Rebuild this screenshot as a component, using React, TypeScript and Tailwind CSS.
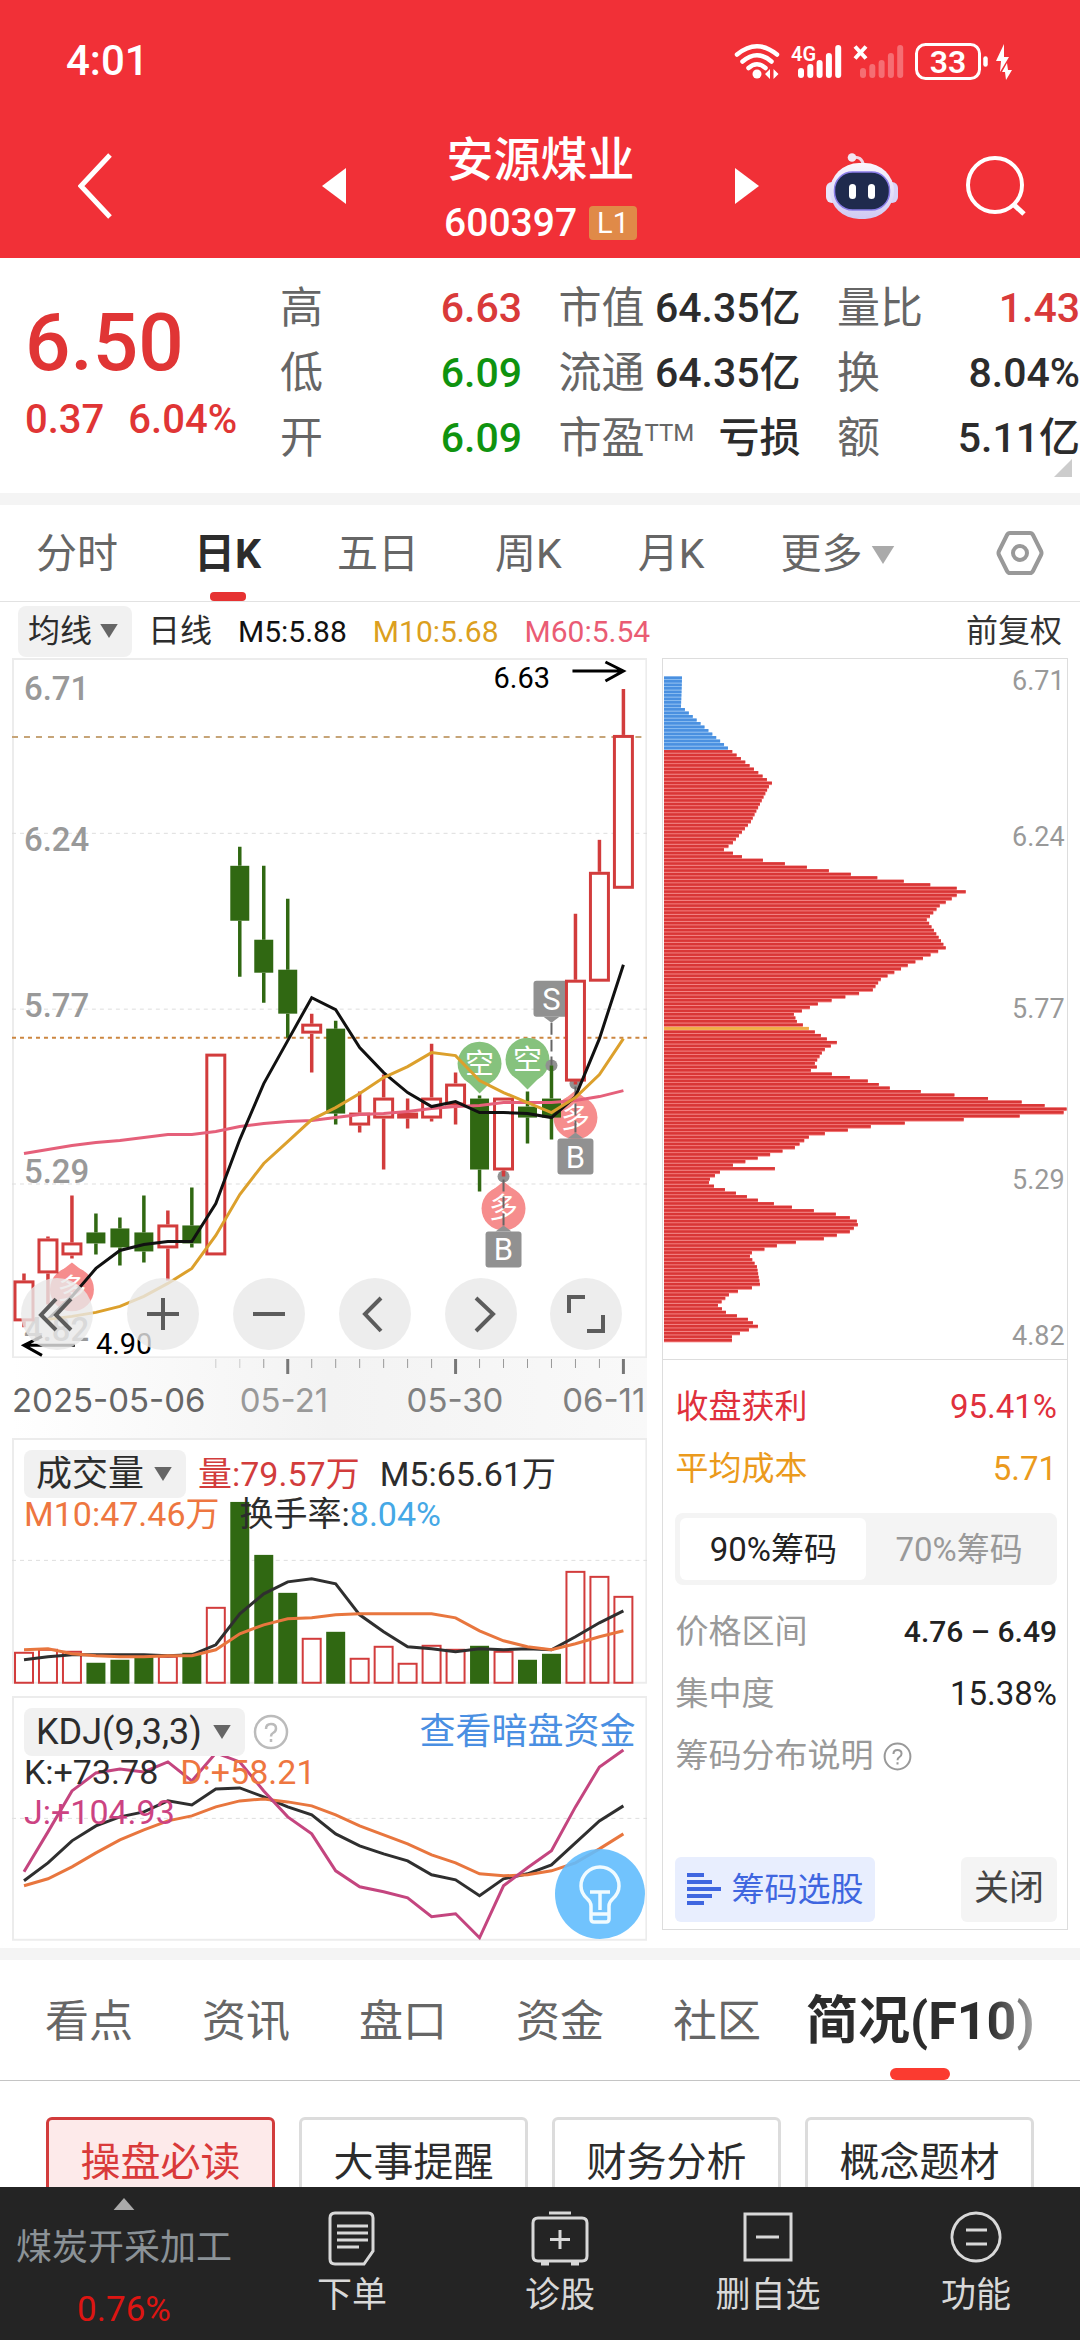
import { useState } from "react";
import type { ReactNode } from "react";
import clsx from "clsx";

const RED = "#d23c3c";
const GREEN = "#306812";

interface Candle {
  up: boolean;
  high: number;
  top: number;
  bottom: number;
  low: number;
  filled?: boolean;
}

const candles: Candle[] = [
  { up: true, high: 1274, top: 1281, bottom: 1322, low: 1328 },
  { up: true, high: 1237, top: 1239, bottom: 1274, low: 1305 },
  { up: true, high: 1196, top: 1243, bottom: 1256, low: 1259 },
  { up: false, high: 1214, top: 1233, bottom: 1244, low: 1255 },
  { up: false, high: 1218, top: 1229, bottom: 1248, low: 1266 },
  { up: false, high: 1196, top: 1233, bottom: 1252, low: 1263 },
  { up: true, high: 1211, top: 1225, bottom: 1249, low: 1281 },
  { up: false, high: 1188, top: 1226, bottom: 1244, low: 1248 },
  { up: true, high: 1054, top: 1054, bottom: 1256, low: 1256 },
  { up: false, high: 847, top: 866, bottom: 921, low: 977 },
  { up: false, high: 866, top: 940, bottom: 973, low: 1003 },
  { up: false, high: 899, top: 970, bottom: 1014, low: 1038 },
  { up: true, high: 1014, top: 1024, bottom: 1034, low: 1073 },
  { up: false, high: 1021, top: 1029, bottom: 1114, low: 1125 },
  { up: true, high: 1092, top: 1113, bottom: 1126, low: 1133 },
  { up: true, high: 1075, top: 1098, bottom: 1119, low: 1170 },
  { up: true, high: 1099, top: 1113, bottom: 1119, low: 1129, filled: true },
  { up: true, high: 1044, top: 1098, bottom: 1119, low: 1122 },
  { up: true, high: 1073, top: 1084, bottom: 1106, low: 1125 },
  { up: false, high: 1096, top: 1099, bottom: 1170, low: 1192 },
  { up: true, high: 1098, top: 1098, bottom: 1171, low: 1177 },
  { up: false, high: 1092, top: 1107, bottom: 1118, low: 1144 },
  { up: false, high: 1066, top: 1099, bottom: 1118, low: 1140 },
  { up: true, high: 914, top: 980, bottom: 1082, low: 1085 },
  { up: true, high: 840, top: 872, bottom: 982, low: 982 },
  { up: true, high: 689, top: 735, bottom: 889, low: 889 },
];

const ma5 = [1326, 1320, 1297, 1269, 1251, 1245, 1242, 1242, 1204, 1140, 1084, 1041, 998, 1010, 1048, 1073, 1093, 1107, 1102, 1113, 1113, 1114, 1118, 1097, 1039, 965];
const ma10 = [1322, 1320, 1317, 1313, 1307, 1297, 1284, 1269, 1236, 1195, 1164, 1142, 1120, 1108, 1094, 1078, 1067, 1053, 1056, 1081, 1093, 1103, 1113, 1098, 1075, 1039];
const ma60 = [1154, 1150, 1146, 1143, 1141, 1138, 1135, 1135, 1132, 1127, 1124, 1122, 1121, 1118, 1115, 1114, 1112, 1109, 1107, 1106, 1103, 1103, 1103, 1101, 1097, 1091];

const volumes = [1653, 1650, 1652, 1664, 1661, 1657, 1657, 1654, 1608, 1503, 1556, 1594, 1639, 1633, 1659, 1647, 1664, 1646, 1650, 1647, 1652, 1661, 1655, 1572, 1577, 1597];
const vol5 = [1661, 1658, 1656, 1656, 1656, 1656, 1657, 1656, 1646, 1615, 1595, 1583, 1580, 1585, 1616, 1633, 1648, 1650, 1653, 1650, 1651, 1650, 1651, 1638, 1624, 1612];
const vol10 = [1651, 1650, 1655, 1657, 1658, 1658, 1657, 1657, 1651, 1635, 1626, 1620, 1619, 1616, 1615, 1615, 1615, 1615, 1619, 1632, 1642, 1648, 1651, 1645, 1638, 1632];

const kdjK = [1882, 1864, 1842, 1827, 1818, 1813, 1802, 1806, 1790, 1789, 1798, 1808, 1816, 1835, 1847, 1855, 1862, 1876, 1881, 1897, 1880, 1875, 1866, 1844, 1822, 1807];
const kdjD = [1887, 1880, 1868, 1854, 1841, 1831, 1822, 1817, 1808, 1802, 1800, 1803, 1807, 1816, 1827, 1836, 1845, 1856, 1864, 1875, 1877, 1876, 1872, 1864, 1850, 1835];
const kdjJ = [1873, 1833, 1792, 1774, 1770, 1773, 1763, 1782, 1754, 1763, 1792, 1818, 1835, 1872, 1888, 1893, 1899, 1918, 1915, 1939, 1887, 1869, 1852, 1808, 1768, 1751];

// [price level, bar length]; the levels in between are interpolated
const chipKnots = [
  [0, 18], [8, 17], [20, 64], [29, 103], [30, 108], [31, 105], [41, 87], [44, 78], [47, 69], [49, 60], [50, 69],
  [51, 78], [52, 99], [56, 187], [60, 293], [61, 302], [62, 293], [63, 288], [65, 276], [69, 263], [77, 282],
  [82, 244], [86, 217], [89, 209], [93, 154], [94, 146], [96, 130], [98, 133], [99, 139], [100, 145], [101, 151],
  [103, 163], [104, 173], [105, 167], [106, 161], [107, 158], [110, 151], [111, 153], [112, 147], [113, 168],
  [115, 204], [117, 226], [118, 257], [121, 358], [122, 381], [123, 403], [124, 400], [125, 356], [126, 300],
  [127, 241], [128, 207], [130, 161], [131, 145], [134, 131], [139, 69], [140, 111], [141, 56], [143, 46],
  [144, 45], [145, 50], [149, 94], [150, 110], [151, 128], [153, 172], [154, 186], [155, 193], [156, 194],
  [158, 186], [160, 160], [161, 132], [162, 113], [164, 88], [165, 86], [168, 93], [173, 96], [174, 88],
  [175, 74], [176, 65], [179, 54], [181, 62], [183, 84], [185, 94], [186, 85], [187, 76], [188, 68], [189, 68],
];

const chips = Array.from({ length: 190 }, (_, i) => {
  const n = chipKnots.findIndex((k) => k[0] >= i);
  const [b, vb] = chipKnots[n];
  if (b === i) return vb;
  const [a, va] = chipKnots[n - 1];
  return va + ((vb - va) * (i - a)) / (b - a);
});

const cx = (i: number) => 24 + i * 24;
const line = (ys: number[], from = 0) =>
  ys.slice(from).map((y, i) => `${cx(i + from)},${y}`).join(" ");

function Line({ data, color, from }: { data: number[]; color: string; from?: number }) {
  return <polyline points={line(data, from)} fill="none" stroke={color} strokeWidth="3" />;
}

function StatusIcons() {
  const heights = [66, 62, 58, 51, 43];
  return (
    <svg viewBox="730 36 290 46" className="h-[46px] w-[290px]" fill="none" stroke="#fff">
      <path d="M737 52.500Q757 36 777 52.500M742.500 59.500Q757 47 771.500 59.500M748.500 66Q757 58.500 765.500 66" strokeWidth="4.500" strokeLinecap="round" />
      <circle cx="757" cy="72" r="4.500" fill="#fff" stroke="none" />
      <path d="M765 72l5-5v10zM778.500 72l-5-5v10z" fill="#fff" stroke="none" />
      <text x="791" y="59" fontSize="20" fontWeight="600" fill="#fff" stroke="none">4G</text>
      {heights.map((y, i) => (
        <path key={i} d={`M${801 + i * 9.3} ${y + 3}V73`} strokeWidth="6" strokeLinecap="round" />
      ))}
      <path d="M855 44.500l11 12M866 44.500l-11 12" strokeWidth="4" />
      {heights.map((y, i) => (
        <path key={i} d={`M${863 + i * 9.3} ${y + 3}V73`} strokeWidth="6" strokeLinecap="round" opacity=".3" />
      ))}
      <rect x="916.500" y="42.500" width="63" height="34" rx="9" strokeWidth="3" />
      <text x="948" y="71" fontSize="32" fontWeight="600" textAnchor="middle" fill="#fff" stroke="none">33</text>
      <path d="M985.500 56.500v6" strokeWidth="4.500" strokeLinecap="round" />
      <path d="M1004 42l-8 17h5l-1 11 9-15h-5zM1007 61l-5 9h3l1 8 6-10h-4z" fill="#fff" stroke="none" />
    </svg>
  );
}

function Robot() {
  return (
    <svg viewBox="0 0 72 66" className="h-[66px] w-[72px]">
      <defs>
        <linearGradient id="shell" x1="0" y1="0" x2="0" y2="1">
          <stop offset="0" stopColor="#fbf6fd" />
          <stop offset="1" stopColor="#cfcaf3" />
        </linearGradient>
      </defs>
      <path d="M26 4.500q10-2 11.500 8" fill="none" stroke="#f0d7e6" strokeWidth="3" />
      <circle cx="26" cy="4.500" r="4.300" fill="#f3e6f3" />
      <rect x="0" y="29" width="12" height="21" rx="6" fill="#e9e5fa" />
      <rect x="60" y="29" width="12" height="21" rx="6" fill="#d8d3f6" />
      <rect x="4" y="10" width="64" height="56" rx="29" fill="url(#shell)" />
      <rect x="8.500" y="19" width="55" height="38" rx="18" fill="#1f2a4d" stroke="#8a7ce8" strokeWidth="1.500" />
      <rect x="23" y="31" width="7" height="15" rx="3.500" fill="#fff" />
      <rect x="42" y="31" width="7" height="15" rx="3.500" fill="#fff" />
    </svg>
  );
}

function Header() {
  return (
    <header className="shrink-0 bg-[#f13037] text-white">
      <div className="flex h-[118px] items-center justify-between pt-1 pr-[60px] pl-[66px]">
        <span className="text-[42px] leading-none font-medium">4:01</span>
        <StatusIcons />
      </div>
      <div className="flex h-[140px] items-center pr-[54px] pb-1 pl-[78px]">
        <button aria-label="返回">
          <svg viewBox="0 0 34 66" className="h-[66px] w-[34px]">
            <path d="M32 2L3 33l29 31" fill="none" stroke="#fff" strokeWidth="5" />
          </svg>
        </button>
        <div className="ml-auto flex items-center gap-[98px]">
          <button aria-label="上一只">
            <svg viewBox="0 0 24 36" className="h-9 w-6"><path d="M24 0v36L0 18z" fill="#fff" /></svg>
          </button>
          <div className="flex flex-col items-center gap-2 pt-[6px]">
            <h1 className="text-[47px] leading-[60px] font-medium">安源煤业</h1>
            <div className="flex items-center gap-3">
              <span className="text-[39px] leading-[50px] font-medium">600397</span>
              <span className="rounded-sm bg-[#e08a48] px-2 text-[29px] leading-[34px]">L1</span>
            </div>
          </div>
          <button aria-label="下一只">
            <svg viewBox="0 0 24 36" className="h-9 w-6"><path d="M0 0v36l24-18z" fill="#fff" /></svg>
          </button>
        </div>
        <button aria-label="助手" className="ml-[67px]"><Robot /></button>
        <button aria-label="搜索" className="ml-[68px]">
          <svg viewBox="0 0 60 60" className="size-[60px]" fill="none" stroke="#fff">
            <circle cx="29" cy="29" r="27" strokeWidth="4" />
            <path d="M47 48l11 10" strokeWidth="5" />
          </svg>
        </button>
      </div>
    </header>
  );
}

function Stat({ label, value, color }: { label: ReactNode; value: string; color?: string }) {
  return (
    <div className="flex justify-between leading-[65px] whitespace-nowrap">
      <dt className="text-[43px] text-[#666]">{label}</dt>
      <dd className={clsx("text-[41px] font-medium", color || "text-[#2c2c2c]")}>{value}</dd>
    </div>
  );
}

function Quote() {
  return (
    <section className="relative flex h-[235px] shrink-0 pt-[18px]">
      <div className="w-[280px] pt-[20px] pl-[25px] text-[#e03535]">
        <p className="text-[80px] leading-[94px] font-medium">6.50</p>
        <p className="flex gap-6 text-[40px] leading-[60px] font-medium">
          <span>0.37</span>
          <span>6.04%</span>
        </p>
      </div>
      <dl className="grid flex-1 grid-cols-[242px_242px_243px] justify-between">
        <div>
          <Stat label="高" value="6.63" color="text-[#d93a3a]" />
          <Stat label="低" value="6.09" color="text-[#0f930f]" />
          <Stat label="开" value="6.09" color="text-[#0f930f]" />
        </div>
        <div>
          <Stat label="市值" value="64.35亿" />
          <Stat label="流通" value="64.35亿" />
          <Stat label={<>市盈<sup className="text-[24px]">TTM</sup></>} value="亏损" />
        </div>
        <div>
          <Stat label="量比" value="1.43" color="text-[#d93a3a]" />
          <Stat label="换" value="8.04%" />
          <Stat label="额" value="5.11亿" />
        </div>
      </dl>
      <svg viewBox="0 0 18 18" className="absolute right-2 bottom-4 size-[18px]"><path d="M18 0v18H0z" fill="#ccc" /></svg>
    </section>
  );
}

function Triangle({ className }: { className?: string }) {
  return (
    <svg viewBox="0 0 20 16" className={clsx("shrink-0", className)}><path d="M0 0h20L10 16z" fill="currentColor" /></svg>
  );
}

function PeriodTabs() {
  const [active, setActive] = useState("日K");
  return (
    <nav className="flex h-[97px] shrink-0 items-stretch gap-[76px] border-b border-[#e2e2e2] pr-9 pl-9 text-[41px] text-[#666]">
      {["分时", "日K", "五日", "周K", "月K"].map((t) => (
        <button
          key={t}
          onClick={() => setActive(t)}
          className={clsx("relative pt-[3px] whitespace-nowrap", active === t && "font-bold text-[#2c2c2c]")}
        >
          {t}
          {active === t && <span className="absolute bottom-0 left-1/2 h-[9px] w-9 -translate-x-1/2 rounded bg-[#e63232]" />}
        </button>
      ))}
      <button className="flex items-center gap-2 pt-[3px] whitespace-nowrap">
        更多
        <Triangle className="h-[18px] w-6 text-[#aaa]" />
      </button>
      <button aria-label="设置" className="ml-auto">
        <svg viewBox="0 0 48 46" className="h-[46px] w-12" fill="none" stroke="#999">
          <path d="M14 3h20q2 0 3 2l8 16q1 2 0 4l-8 16q-1 2-3 2H14q-2 0-3-2L3 25q-1-2 0-4l8-16q1-2 3-2z" strokeWidth="4" />
          <circle cx="24" cy="23" r="7" strokeWidth="4" />
        </svg>
      </button>
    </nav>
  );
}

function Picker({ label, name, className }: { label: string; name: string; className?: string }) {
  return (
    <span className="relative inline-flex items-center">
      <select
        aria-label={name}
        className={clsx("appearance-none rounded-lg bg-[#f1f1f1] pr-[40px] leading-none text-[#2c2c2c]", className)}
      >
        <option>{label}</option>
      </select>
      <Triangle className="pointer-events-none absolute right-[14px] h-[14px] w-[18px] text-[#666]" />
    </span>
  );
}

function Legend() {
  return (
    <div className="flex h-14 shrink-0 items-center gap-[26px] pt-[2px] pr-[18px] pl-[18px] text-[30px] whitespace-nowrap">
      <span className="flex items-center gap-4">
        <Picker label="均线" name="主图指标" className="h-[51px] w-[114px] pl-[10px] text-[32px]" />
        <span className="text-[32px] text-[#2c2c2c]">日线</span>
      </span>
      <span className="text-[#111]">M5:5.88</span>
      <span className="text-[#dc9f20]">M10:5.68</span>
      <span className="text-[#ea5c74]">M60:5.54</span>
      <span className="ml-auto text-[32px] text-[#333]">前复权</span>
    </div>
  );
}

function Balloon({ x, y, up, children }: { x: number; y: number; up?: boolean; children: string }) {
  const tip = up
    ? `M${x - 14} ${y - 16}L${x} ${y - 27}L${x + 14} ${y - 16}z`
    : `M${x - 14} ${y + 16}L${x} ${y + 30}L${x + 14} ${y + 16}z`;
  return (
    <g>
      <g fill={up ? "#f68d8d" : "#86c27d"}>
        <circle cx={x} cy={y} r="22" />
        <path d={tip} />
      </g>
      <text x={x} y={y + 10} fontSize="29" textAnchor="middle" fill="#fff">
        {children}
      </text>
    </g>
  );
}

function Tag({ x, y, dot, children }: { x: number; y: number; dot: number; children: string }) {
  const below = dot > y;
  const edge = below ? y + 18 : y - 18;
  const tip = below ? edge + 6 : edge - 6;
  return (
    <g>
      <circle cx={x} cy={dot} r="6" fill="#919191" />
      <path d={`M${x} ${tip}V${dot}`} stroke="#666" strokeWidth="2" strokeDasharray="12 5" />
      <path d={`M${x - 8} ${edge}L${x} ${tip}L${x + 8} ${edge}z`} fill="#919191" />
      <rect x={x - 18} y={y - 18} width="36" height="36" rx="3" fill="#919191" />
      <text x={x} y={y + 11} fontSize="31" textAnchor="middle" fill="#fff">{children}</text>
    </g>
  );
}

const toolIcons = [
  { name: "最左", d: "M35 21L20 37l15 15M50 21L35 37l15 15" },
  { name: "放大", d: "M20 36h32M36 20v32" },
  { name: "缩小", d: "M20 36h32" },
  { name: "左移", d: "M42 20L26 36l16 17" },
  { name: "右移", d: "M31 20l17 16-17 17" },
  { name: "全屏", d: "M19 35V19h16M53 37v16H37" },
];

function PriceChart() {
  return (
    <div className="relative">
      <svg viewBox="12 658 636 701" className="block w-full">
        <rect x="13" y="659" width="634" height="699" fill="none" stroke="#ececec" strokeWidth="2" />
        <path d="M12 833.500h636M12 1009.500h636M12 1184.500h636" stroke="#dedede" strokeDasharray="4 4" />
        <path d="M12 737h630" stroke="#c6a477" strokeWidth="2" strokeDasharray="6 6" />
        <path d="M12 1038h636" stroke="#cc8640" strokeWidth="2" strokeDasharray="4 4" />
        <g fontSize="33" fontWeight="500" fill="#999">
          <text x="24" y="700">6.71</text>
          <text x="24" y="851">6.24</text>
          <text x="24" y="1017">5.77</text>
          <text x="24" y="1184">5.29</text>
          <text x="24" y="1342">4.82</text>
        </g>

        <Balloon x={480} y={1064}>空</Balloon>
        <Balloon x={528} y={1060}>空</Balloon>
        <Balloon x={72} y={1290} up>多</Balloon>
        <Balloon x={504} y={1209} up>多</Balloon>
        <Balloon x={576} y={1118} up>多</Balloon>
        <Tag x={552} y={999} dot={1066}>S</Tag>
        <Tag x={504} y={1250} dot={1177}>B</Tag>
        <Tag x={576} y={1157} dot={1084}>B</Tag>

        {candles.map((c, i) => (
          <g key={i} stroke={c.up ? RED : GREEN} strokeWidth="3">
            <path d={`M${cx(i)} ${c.high}V${c.top}M${cx(i)} ${c.bottom}V${c.low}`} strokeWidth="3.500" />
            {c.up ? (
              <rect x={cx(i) - 9} y={c.top + 1.5} width="18" height={c.bottom - c.top - 3} fill={c.filled ? RED : "#fff"} />
            ) : (
              <rect x={cx(i) - 9.5} y={c.top} width="19" height={c.bottom - c.top} fill={GREEN} stroke="none" />
            )}
          </g>
        ))}
        <Line data={ma60} color="#e5607a" />
        <Line data={ma5} color="#111" from={1} />
        <Line data={ma10} color="#dca02c" from={1} />

        <g fontSize="29" fill="#000">
          <text x="494" y="688">6.63</text>
          <text x="96" y="1355">4.90</text>
        </g>
        <path d="M573 671h51M606 662l18 9-18 10M75 1346H24M42 1337l-18 9 18 10" fill="none" stroke="#000" strokeWidth="3" />
      </svg>
      <div className="absolute inset-x-[9px] bottom-[8px] flex justify-between pr-4">
        {toolIcons.map((t) => (
          <button key={t.name} aria-label={t.name} className="size-[72px] rounded-full bg-[#e8e8e8]/80">
            <svg viewBox="0 0 72 72" className="size-full" fill="none" stroke="#5c5c5c" strokeWidth="4">
              <path d={t.d} />
            </svg>
          </button>
        ))}
      </div>
    </div>
  );
}

function DateAxis() {
  return (
    <svg viewBox="12 1359 636 80" className="block w-full bg-linear-to-r from-white via-[#f3f3f3] to-[#f9f9f9]" fontFamily="Inter" fontSize="33">
      {candles.map((_, i) =>
        i < 8 ? null : [11, 18, 25].includes(i) ? (
          <path key={i} d={`M${cx(i)} 1360v15`} stroke="#777" strokeWidth="3" />
        ) : (
          <path key={i} d={`M${cx(i)} 1360v9`} stroke={i < 10 ? "#ccc" : "#999"} />
        ),
      )}
      <text x="12" y="1413" fill="#666">2025-05-06</text>
      <text x="240" y="1413" fill="#999">05-21</text>
      <text x="407" y="1413" fill="#808080">05-30</text>
      <text x="646" y="1413" fill="#808080" textAnchor="end">06-11</text>
    </svg>
  );
}

function VolumeChart() {
  return (
    <div className="relative">
      <svg viewBox="12 1439 636 246" className="block w-full">
        <rect x="13" y="1440" width="634" height="244" fill="none" stroke="#ececec" strokeWidth="2" />
        <path d="M12 1561.500h636" stroke="#dedede" strokeDasharray="4 4" />
        {volumes.map((y, i) =>
          candles[i].up ? (
            <rect key={i} x={cx(i) - 9} y={y + 1} width="18" height={1683 - y} fill="#fff" stroke={RED} strokeWidth="2" />
          ) : (
            <rect key={i} x={cx(i) - 9.5} y={y} width="19" height={1685 - y} fill={GREEN} />
          ),
        )}
        <Line data={vol5} color="#2f2f2f" />
        <Line data={vol10} color="#e8763e" />
      </svg>
      <div className="absolute inset-x-3 top-3 text-[34px] leading-[40px] whitespace-nowrap text-[#2c2c2c]">
        <div className="flex items-center">
          <Picker label="成交量" name="副图指标" className="h-12 w-[162px] pl-3 text-[36px]" />
          <span className="ml-3 text-[#d23c3c]">量:79.57万</span>
          <span className="ml-5">M5:65.61万</span>
        </div>
        <div className="-mt-1">
          <span className="text-[#ee7640]">M10:47.46万</span>
          <span className="ml-5">换手率:</span>
          <span className="text-[#45a8e6]">8.04%</span>
        </div>
      </div>
    </div>
  );
}

function KdjChart() {
  return (
    <div className="relative mt-3">
      <svg viewBox="12 1697 636 245" className="block w-full">
        <rect x="13" y="1698" width="634" height="243" fill="none" stroke="#ececec" strokeWidth="2" />
        <path d="M12 1819.500h636" stroke="#dedede" strokeDasharray="4 4" />
        <Line data={kdjK} color="#2f2f2f" />
        <Line data={kdjD} color="#e8763e" />
        <Line data={kdjJ} color="#c4457f" />
      </svg>
      <div className="absolute inset-x-3 top-3 text-[34px] leading-[40px] whitespace-nowrap text-[#2c2c2c]">
        <div className="flex items-center">
          <Picker label="KDJ(9,3,3)" name="技术指标" className="h-12 w-[221px] pl-3 text-[36px]" />
          <button aria-label="指标说明" className="ml-2"><Question className="size-9 text-[#bbb]" /></button>
          <a href="#funds" className="ml-auto text-[36px] text-[#4a8fe2]">查看暗盘资金</a>
        </div>
        <div className="-mt-1">
          <span>K:+73.78</span>
          <span className="ml-[22px] text-[#ee7640]">D:+58.21</span>
        </div>
        <div className="text-[#cc4382]">J:+104.93</div>
      </div>
      <button aria-label="提示" className="absolute right-0.5 bottom-0.5 size-[90px] rounded-full bg-[#62bdfd]/90">
        <svg viewBox="0 0 90 90" className="size-full" fill="none" stroke="#f0fbff" strokeWidth="3.500">
          <path d="M36 66V57q0-4-4-7.500Q26 44 26 37a19 19 0 0 1 38 0q0 7-6 12.500-4 3.500-4 7.500v13q0 3-3 3H39q-3 0-3-3zM36 65h18M35 43h20M45 43v18" />
        </svg>
      </button>
    </div>
  );
}

function Question({ className }: { className?: string }) {
  return (
    <svg viewBox="0 0 36 36" className={clsx("block", className)} fill="none" stroke="currentColor" strokeWidth="2.500">
      <circle cx="18" cy="18" r="16" />
      <path d="M13 15q0-5 5-5t5 4.500q0 3-3 4.500-2 1-2 3.500M18 25v3" />
    </svg>
  );
}

function ChipChart() {
  return (
    <svg viewBox="663 658 404 701" className="block w-full border-b border-[#ddd]">
      {chips.map((w, i) => {
        const y = 675.5 + i * 3.508;
        const [fill, gap] = i <= 20 ? ["#4a90e0", "#8fc0f2"] : i === 100 ? ["#efac48", "#f5bd5c"] : ["#d93636", "#f58080"];
        return (
          <g key={i}>
            <rect x="664" y={y} width={w} height="3.500" fill={gap} />
            <rect x="664" y={y} width={w} height="2.600" fill={fill} />
          </g>
        );
      })}
      <g fontSize="27" fill="#999" textAnchor="end">
        <text x="1065" y="689">6.71</text>
        <text x="1065" y="845">6.24</text>
        <text x="1065" y="1017">5.77</text>
        <text x="1065" y="1189">5.29</text>
        <text x="1065" y="1345">4.82</text>
      </g>
    </svg>
  );
}

function ChipPanel() {
  const [range, setRange] = useState("90%筹码");
  return (
    <aside className="mb-[18px] flex min-w-0 flex-[404] flex-col border border-[#ddd] text-[33px]">
      <ChipChart />
      <div className="flex flex-1 flex-col pt-4 pr-[10px] pb-[7px] pl-3">
        <div className="flex justify-between leading-[62px] text-[#e0303c]">
          <span>收盘获利</span>
          <span>95.41%</span>
        </div>
        <div className="flex justify-between leading-[62px] text-[#eb9a1c]">
          <span>平均成本</span>
          <span>5.71</span>
        </div>
        <div className="mt-[13px] mb-4 flex h-[72px] rounded-lg bg-[#f4f4f4] p-[5px]">
          {["90%筹码", "70%筹码"].map((r) => (
            <button
              key={r}
              onClick={() => setRange(r)}
              className={clsx("flex-1 rounded-md whitespace-nowrap", range === r ? "bg-white text-[#222]" : "text-[#999]")}
            >
              {r}
            </button>
          ))}
        </div>
        <div className="flex justify-between leading-[62px]">
          <span className="text-[#999]">价格区间</span>
          <span className="text-[30px] font-medium text-[#222]">4.76 – 6.49</span>
        </div>
        <div className="flex justify-between leading-[62px]">
          <span className="text-[#999]">集中度</span>
          <span className="text-[#222]">15.38%</span>
        </div>
        <div className="flex items-center gap-[10px] leading-[62px] text-[#999]">
          筹码分布说明
          <button aria-label="筹码分布说明"><Question className="size-[29px]" /></button>
        </div>
        <div className="mt-auto flex h-[65px] justify-between">
          <button className="flex items-center gap-[10px] rounded-md bg-[#e8eefe] px-3 whitespace-nowrap text-[#3f66e0]">
            <svg viewBox="0 0 34 32" className="h-8 w-[34px]" stroke="currentColor" strokeWidth="4">
              <path d="M0 2h17M0 9h25M0 16h34M0 23h25M0 30h17" />
            </svg>
            筹码选股
          </button>
          <button className="rounded-md bg-[#f4f4f4] px-[13px] text-[35px] text-[#444]">关闭</button>
        </div>
      </div>
    </aside>
  );
}

function InfoTabs() {
  const [active, setActive] = useState("简况(F10)");
  return (
    <nav className="flex h-[121px] shrink-0 items-stretch gap-[69px] border-b border-[#c4c4c4] pl-[45px] text-[44px] text-[#666]">
      {["看点", "资讯", "盘口", "资金", "社区", "简况(F10)"].map((t) => (
        <button key={t} onClick={() => setActive(t)} className={clsx("relative pt-1 whitespace-nowrap", t === "简况(F10)" && "-ml-6")}>
          <span
            className={clsx(
              active === t && "bg-linear-to-r from-[#2c2c2c] from-80% to-[#aaa] bg-clip-text text-[52px] font-bold text-transparent",
            )}
          >
            {t}
          </span>
          {active === t && <span className="absolute bottom-0 left-1/2 h-3 w-[60px] -translate-x-1/2 rounded-full bg-[#fb3b30]" />}
        </button>
      ))}
    </nav>
  );
}

function F10Cards() {
  return (
    <div className="grid grid-cols-4 gap-6 px-[46px] pt-9">
      {["操盘必读", "大事提醒", "财务分析", "概念题材"].map((t, i) => (
        <button
          key={t}
          className={clsx(
            "h-[90px] rounded-md border-3 pt-[2px] text-[40px] whitespace-nowrap",
            i === 0 ? "border-[#d23c3c] bg-[#fdeaea] text-[#d93a3a]" : "border-[#dcdcdc] text-[#2c2c2c]",
          )}
        >
          {t}
        </button>
      ))}
    </div>
  );
}

const actions = [
  {
    label: "下单",
    icon: <path d="M8 3h33q5 0 5 5v33L37 54H8q-5 0-5-5V8q0-5 5-5zM10 16h31M10 23h31M10 30h31M10 37h22" />,
  },
  {
    label: "诊股",
    icon: <path d="M14 3h22M3 8h44q5 0 5 5v33q0 5-5 5H3q-5 0-5-5V13q0-5 5-5zM25 20v19M15 29.500h20M6 54h8M36 54h8" />,
  },
  { label: "删自选", icon: <path d="M2 4h46v46H2zM13 27h23" /> },
  { label: "功能", icon: <path d="M25 3a24 24 0 1 0 .010 0zM15 20h21M15 34h21" /> },
];

function BottomBar() {
  return (
    <footer className="flex h-[153px] shrink-0 bg-[#242424] whitespace-nowrap">
      <button className="flex w-[248px] flex-col items-center pt-[11px] text-[36px]">
        <svg viewBox="0 0 26 15" className="h-[15px] w-[26px]"><path d="M13 0l13 15H0z" fill="#aaa" /></svg>
        <span className="mt-[10px] leading-[56px] text-[#8b9297]">煤炭开采加工</span>
        <span className="mt-1 text-[35px] leading-[60px] text-[#dd1512]">0.76%</span>
      </button>
      {actions.map((a) => (
        <button key={a.label} className="flex flex-1 flex-col items-center gap-[2px] pt-[23px] text-[35px] leading-[54px] text-[#d8d8d8]">
          <svg viewBox="-4 0 58 57" className="h-[57px] w-[58px]" fill="none" stroke="#d8d8d8" strokeWidth="3">{a.icon}</svg>
          {a.label}
        </button>
      ))}
    </footer>
  );
}

export default function App() {
  return (
    <div className="flex h-screen flex-col overflow-hidden bg-white font-[Roboto,'Noto_Sans_CJK_SC',sans-serif]">
      <Header />
      <main className="flex min-h-0 flex-1 flex-col overflow-hidden">
        <Quote />
        <div className="h-3 shrink-0 bg-[#f4f4f4]" />
        <PeriodTabs />
        <Legend />
        <section className="flex shrink-0 gap-[15px] pr-3 pl-3">
          <div className="min-w-0 flex-[636] pb-[7px]">
            <PriceChart />
            <DateAxis />
            <VolumeChart />
            <KdjChart />
          </div>
          <ChipPanel />
        </section>
        <div className="h-3 shrink-0 bg-[#f4f4f4]" />
        <InfoTabs />
        <F10Cards />
      </main>
      <BottomBar />
    </div>
  );
}
